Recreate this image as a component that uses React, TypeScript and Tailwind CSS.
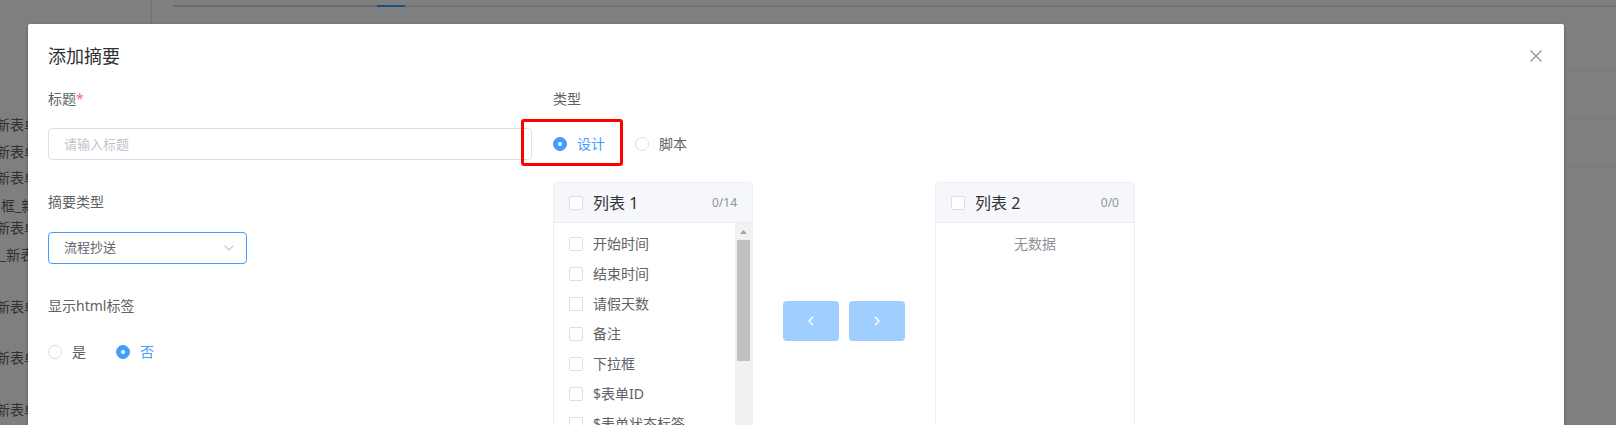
import React from "react";

const FONT = "font-['Noto_Sans','Noto_Sans_CJK_SC',sans-serif]";

function Checkbox() {
  return <span className="w-[14px] h-[14px] shrink-0 rounded-[2px] border border-[#dcdfe6] bg-white" />;
}

function Radio({ checked, label }: { checked: boolean; label: string }) {
  return (
    <div className="flex items-center mr-[30px]">
      {checked ? (
        <span className="w-[14px] h-[14px] rounded-full bg-[#409eff] border border-[#409eff] flex items-center justify-center">
          <span className="w-[4px] h-[4px] rounded-full bg-white" />
        </span>
      ) : (
        <span className="w-[14px] h-[14px] rounded-full bg-white border border-[#dcdfe6]" />
      )}
      <span className={`ml-[10px] text-sm leading-5 ${checked ? "text-[#409eff]" : "text-[#606266]"}`}>{label}</span>
    </div>
  );
}

function PanelHeader({ title, count }: { title: string; count: string }) {
  return (
    <div className="h-10 bg-[#f5f7fa] border-b border-[#ebeef5] flex items-center px-[15px] rounded-t-[4px]">
      <Checkbox />
      <span className="ml-[10px] text-base leading-5 text-[#303133]">{title}</span>
      <span className="ml-auto text-xs text-[#909399]">{count}</span>
    </div>
  );
}

const items = ["开始时间", "结束时间", "请假天数", "备注", "下拉框", "$表单ID", "$表单状态标签", "$表单创建人", "$表单创建时间"];

export default function App() {
  return (
    <div className={`relative w-[1616px] h-[425px] overflow-hidden bg-white ${FONT}`}>
      {/* background page */}
      <div className="flex h-full">
        <div className="w-[152px] shrink-0 border-r border-[#e6e6e6] overflow-hidden text-sm text-[#606266] pt-[115px] whitespace-nowrap">
          <div className="h-5 leading-5 -ml-[4px]">新表单</div>
          <div className="h-5 leading-5 -ml-[4px] mt-[7px]">新表单</div>
          <div className="h-5 leading-5 -ml-[4px] mt-[6px]">新表单</div>
          <div className="h-5 leading-5 ml-[1px] mt-[8px]">框_新表单</div>
          <div className="h-5 leading-5 -ml-[4px] mt-[2px]">新表单</div>
          <div className="h-5 leading-5 ml-0 mt-[7px]">_新表单</div>
          <div className="h-5 leading-5 -ml-[4px] mt-[32px]">新表单</div>
          <div className="h-5 leading-5 -ml-[4px] mt-[31px]">新表单</div>
          <div className="h-5 leading-5 -ml-[4px] mt-[32px]">新表单</div>
        </div>
        <div className="flex-1 pl-[21px]">
          <div className="mt-[5px] flex h-[2px]">
            <div className="w-[204px] bg-[#d3d4dc]" />
            <div className="w-[28px] bg-[#409eff]" />
            <div className="flex-1 bg-[#e4e7ed]" />
          </div>
          <div className="h-[64px] border-b border-[#ebeef5]" />
          <div className="h-[48px] border-b border-[#ebeef5]" />
          <div className="h-[48px] border-b border-[#ebeef5]" />
        </div>
      </div>

      {/* modal mask */}
      <div className="absolute inset-0 bg-black/50" />

      {/* dialog */}
      <div className="absolute left-[28px] top-[24px] w-[1536px] h-[520px] bg-white rounded-[2px] shadow-[0_1px_3px_rgba(0,0,0,0.3)]">
        <div className="relative px-5 pt-5 pb-[10px]">
          <span className="block text-[18px] leading-6 text-[#303133]">添加摘要</span>
          <svg className="absolute top-[26px] right-[22px]" width="12" height="12" viewBox="0 0 12 12">
            <path d="M0.5 0.5 L11.5 11.5 M11.5 0.5 L0.5 11.5" stroke="#909399" strokeWidth="1.2" fill="none" />
          </svg>
        </div>

        <div className="px-5 pt-[11px] flex">
          {/* left column */}
          <div className="w-[484px] shrink-0">
            <div className="h-5 leading-5 text-sm text-[#606266]">
              标题<span className="text-[#f56c6c]">*</span>
            </div>
            <input
              readOnly
              placeholder="请输入标题"
              className="mt-[19px] block w-[484px] h-8 border border-[#dcdfe6] rounded-[4px] px-[15px] text-[13px] text-[#606266] placeholder:text-[#c0c4cc] outline-none bg-white"
            />
            <div className="mt-8 h-5 leading-5 text-sm text-[#606266]">摘要类型</div>
            <div className="mt-5 w-[199px] h-8 border border-[#409eff] rounded-[4px] flex items-center justify-between pl-[15px] pr-[12px]">
              <span className="text-[13px] text-[#606266]">流程抄送</span>
              <svg width="10" height="6" viewBox="0 0 10 6">
                <path d="M0.6 0.6 L5 5 L9.4 0.6" stroke="#c0c4cc" strokeWidth="1.1" fill="none" />
              </svg>
            </div>
            <div className="mt-8 h-5 leading-5 text-sm text-[#606266]">显示html标签</div>
            <div className="mt-[26px] h-5 flex items-center">
              <Radio checked={false} label="是" />
              <Radio checked={true} label="否" />
            </div>
          </div>

          {/* right column */}
          <div className="ml-[21px]">
            <div className="h-5 leading-5 text-sm text-[#606266]">类型</div>
            <div className="relative mt-[19px] h-8 flex items-center">
              <Radio checked={true} label="设计" />
              <Radio checked={false} label="脚本" />
              <div className="absolute left-[-32px] top-[-9px] w-[102px] h-[47px] border-[3px] border-[#ff0000] rounded-[3px]" />
            </div>

            <div className="mt-[22px] flex items-start">
              {/* panel 1 */}
              <div className="w-[200px] h-[300px] border border-[#ebeef5] rounded-[4px] bg-white overflow-hidden">
                <PanelHeader title="列表 1" count="0/14" />
                <div className="flex h-[258px]">
                  <div className="flex-1 pt-[6px] overflow-hidden">
                    {items.map((it) => (
                      <div key={it} className="h-[30px] flex items-center pl-[15px] whitespace-nowrap">
                        <Checkbox />
                        <span className="ml-[10px] text-sm text-[#606266]">{it}</span>
                      </div>
                    ))}
                  </div>
                  <div className="w-[17px] shrink-0 bg-[#f1f1f1] flex flex-col items-center">
                    <div className="h-[17px] w-full flex items-center justify-center">
                      <svg width="7" height="4" viewBox="0 0 7 4">
                        <path d="M0 4 L3.5 0 L7 4 Z" fill="#a3a3a3" />
                      </svg>
                    </div>
                    <div className="w-[13px] h-[121px] bg-[#c1c1c1]" />
                  </div>
                </div>
              </div>

              {/* buttons */}
              <div className="px-[30px] mt-[119px] flex gap-[10px]">
                <div className="w-[56px] h-10 rounded-[4px] bg-[#a0cfff] flex items-center justify-center">
                  <svg width="6" height="10" viewBox="0 0 6 10">
                    <path d="M5 0.8 L1 5 L5 9.2" stroke="#ffffff" strokeWidth="1.4" fill="none" />
                  </svg>
                </div>
                <div className="w-[56px] h-10 rounded-[4px] bg-[#a0cfff] flex items-center justify-center">
                  <svg width="6" height="10" viewBox="0 0 6 10">
                    <path d="M1 0.8 L5 5 L1 9.2" stroke="#ffffff" strokeWidth="1.4" fill="none" />
                  </svg>
                </div>
              </div>

              {/* panel 2 */}
              <div className="w-[200px] h-[300px] border border-[#ebeef5] rounded-[4px] bg-white overflow-hidden">
                <PanelHeader title="列表 2" count="0/0" />
                <div className="pt-[6px] h-[36px] leading-[30px] text-center text-sm text-[#909399]">无数据</div>
              </div>
            </div>
          </div>
        </div>
      </div>
    </div>
  );
}
